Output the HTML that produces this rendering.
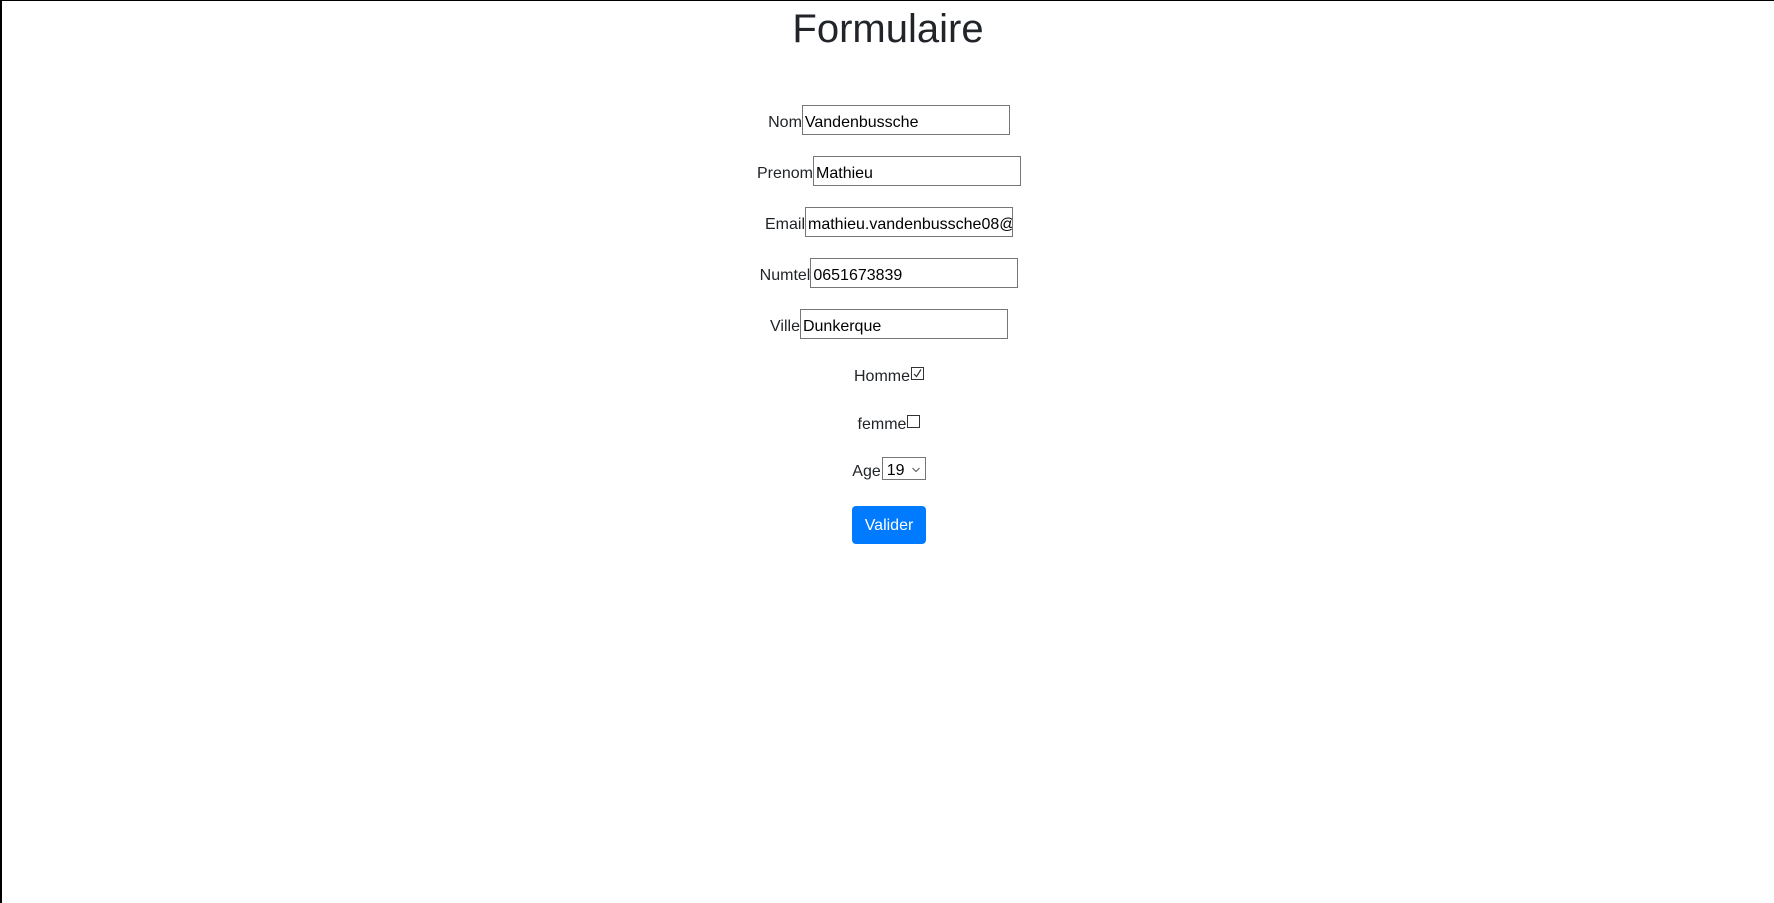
<!DOCTYPE html>
<html><head><meta charset="utf-8"><style>
html,body{margin:0;padding:0;background:#fff;}
body{width:1774px;height:903px;position:relative;overflow:hidden;font-family:"Liberation Sans",sans-serif;color:#212529;border-top:1px solid #000;border-left:2px solid #000;box-sizing:border-box;}
h1{position:absolute;left:0;right:0;top:4px;margin:0;text-align:center;font-weight:400;font-size:40px;line-height:48px;}
.row{position:absolute;left:0;width:1774px;display:flex;justify-content:center;align-items:center;font-size:16px;}
.row span{position:relative;top:3px;}
.inp{width:202px;height:28px;border:1px solid #767676;box-sizing:content-box;font-size:16px;line-height:34px;padding:0 2px;color:#000;overflow:hidden;white-space:nowrap;}
.cb{width:11px;height:11px;border:1px solid #333;margin-left:1px;position:relative;top:-1px;}
.sel{height:23px;border:1px solid #767676;margin-left:1px;font-size:16px;line-height:25px;padding-left:4px;box-sizing:border-box;width:44px;color:#000;position:relative;}
.btn{background:#007bff;color:#fff;border-radius:4px;width:74px;height:38px;display:flex;align-items:center;justify-content:center;font-size:16px;padding-top:2px;box-sizing:border-box;}
</style></head><body>
<h1>Formulaire</h1>
<div class="row" style="top:104px"><span>Nom</span><div class="inp">Vandenbussche</div></div>
<div class="row" style="top:155px"><span>Prenom</span><div class="inp">Mathieu</div></div>
<div class="row" style="top:206px"><span>Email</span><div class="inp">mathieu.vandenbussche08@</div></div>
<div class="row" style="top:257px"><span>Numtel</span><div class="inp">0651673839</div></div>
<div class="row" style="top:308px"><span>Ville</span><div class="inp">Dunkerque</div></div>
<div class="row" style="top:364px"><span>Homme</span><div class="cb"><svg width="11" height="11" style="position:absolute;left:0;top:0"><path d="M2 6 L4.5 8.5 L9 1.5" stroke="#333" stroke-width="1.2" fill="none"/></svg></div></div>
<div class="row" style="top:412px"><span>femme</span><div class="cb"></div></div>
<div class="row" style="top:456px"><span>Age</span><div class="sel">19<svg width="8" height="6" style="position:absolute;right:5px;top:9px"><path d="M0.5 1 L4 4.5 L7.5 1" stroke="#555" fill="none"/></svg></div></div>
<div class="row" style="top:505px"><div class="btn">Valider</div></div>
</body></html>
